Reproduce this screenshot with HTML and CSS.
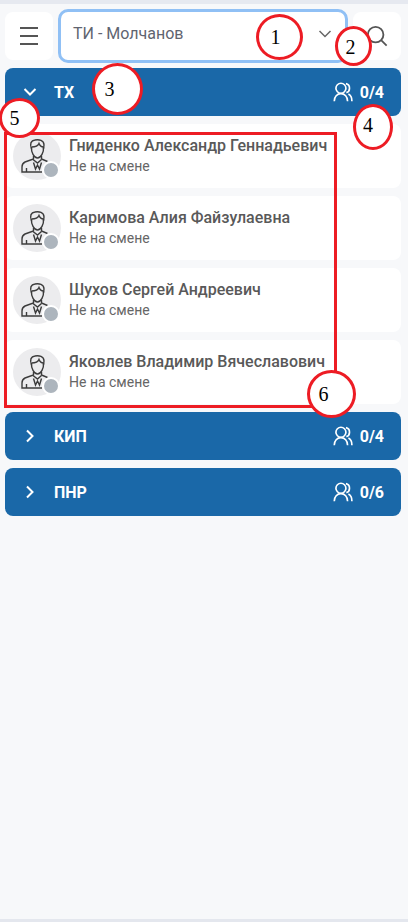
FILE: index.html
```html
<!DOCTYPE html>
<html lang="ru">
<head>
    <meta charset="UTF-8">
    <meta name="viewport" content="width=device-width, initial-scale=1.0">
    <title>Смена</title>
    <link rel="stylesheet" href="styles.css">
</head>
<body>
    <svg class="sprite" width="0" height="0">
        <symbol id="worker" viewBox="0 0 48 48">
            <path d="M18.500 17C16.500 11.500 18 8.500 22 8c4-1 9 .5 9 5l-.5 4"/>
            <path d="M18.500 15c3.500 0 6.500-1 7.500-3.500 1 2.500 2.500 3.500 4.500 3.500"/>
            <path d="M18.500 15c-.5 5 2.500 11 6 11s6.500-6 6-11"/>
            <path d="M20.500 24v3L12 30c-2 1-3 2.500-3 5v5h20M28.500 24v3l6 2.500"/>
            <path d="M20 27.500l4.500 3.500 4-3.500M20.500 30.500l2 6.500 2-4 2 4 2-6.500M13.500 36v4"/>
        </symbol>
        <symbol id="people" viewBox="0 0 24 24">
            <circle cx="9.500" cy="7.500" r="6"/>
            <path d="M1.500 23c0-5.500 3.500-9 8-9s8 3.500 8 9M15.500 2c2.500.5 4.300 2.800 4.300 5.500 0 2.500-1.600 4.700-3.800 5.300M18.500 14.500c2.600 1.200 4.200 4.500 4.200 8.500"/>
        </symbol>
    </svg>

    <div class="page">
        <header class="toolbar">
            <button class="tool-btn" aria-label="Меню">
                <svg class="menu-icon" viewBox="0 0 18 18"><path d="M0 1h18M0 9h18M0 17h18"/></svg>
            </button>
            <div class="team-select">
                <span>ТИ - Молчанов</span>
                <svg class="select-arrow" viewBox="0 0 14 10"><path d="M1.500 2l5.500 5.500 5.500-5.500"/></svg>
            </div>
            <button class="tool-btn" aria-label="Поиск">
                <svg class="search-icon" viewBox="0 0 24 24"><circle cx="10.500" cy="10.500" r="8.500"/><path d="M16.500 16.500l6 6"/></svg>
            </button>
        </header>

        <main class="groups">
            <section class="group">
                <div class="group-head">
                    <svg class="chevron" viewBox="0 0 14 14"><path d="M1.500 4l5.500 5.500 5.500-5.500"/></svg>
                    <span class="group-name">ТХ</span>
                    <svg class="people-icon"><use href="#people"/></svg>
                    <span class="group-count">0/4</span>
                </div>
            </section>
            <div class="person">
                <div class="avatar"><svg class="worker"><use href="#worker"/></svg><i class="status"></i></div>
                <div class="person-text"><div class="person-name">Гниденко Александр Геннадьевич</div><div class="person-state">Не на смене</div></div>
            </div>
            <div class="person">
                <div class="avatar"><svg class="worker"><use href="#worker"/></svg><i class="status"></i></div>
                <div class="person-text"><div class="person-name">Каримова Алия Файзулаевна</div><div class="person-state">Не на смене</div></div>
            </div>
            <div class="person">
                <div class="avatar"><svg class="worker"><use href="#worker"/></svg><i class="status"></i></div>
                <div class="person-text"><div class="person-name">Шухов Сергей Андреевич</div><div class="person-state">Не на смене</div></div>
            </div>
            <div class="person">
                <div class="avatar"><svg class="worker"><use href="#worker"/></svg><i class="status"></i></div>
                <div class="person-text"><div class="person-name">Яковлев Владимир Вячеславович</div><div class="person-state">Не на смене</div></div>
            </div>
            <section class="group">
                <div class="group-head">
                    <svg class="chevron" viewBox="0 0 14 14"><path d="M4 1.500l5.500 5.500-5.500 5.500"/></svg>
                    <span class="group-name">КИП</span>
                    <svg class="people-icon"><use href="#people"/></svg>
                    <span class="group-count">0/4</span>
                </div>
            </section>
            <section class="group">
                <div class="group-head">
                    <svg class="chevron" viewBox="0 0 14 14"><path d="M4 1.500l5.500 5.500-5.500 5.500"/></svg>
                    <span class="group-name">ПНР</span>
                    <svg class="people-icon"><use href="#people"/></svg>
                    <span class="group-count">0/6</span>
                </div>
            </section>
        </main>
    </div>

    <!-- пометки поверх скриншота -->
    <div class="mark-box"></div>
    <div class="mark mark-1">1</div>
    <div class="mark mark-2">2</div>
    <div class="mark mark-3">3</div>
    <div class="mark mark-4">4</div>
    <div class="mark mark-5">5</div>
    <div class="mark mark-6">6</div>
</body>
</html>
```

FILE: styles.css
```css
body {
    margin: 0;
    height: 922px;
    overflow: hidden;
    background-color: #f7f8fa;
    font-family: Roboto, "Liberation Sans", sans-serif;
}

.sprite {
    display: block;
}

.page {
    box-sizing: border-box;
    height: 922px;
    padding: 8px 7px 0 5px;
    border-top: 4px solid #e6e9f0;
    border-bottom: 3px solid #e4e7ee;
}

.toolbar {
    display: flex;
    gap: 5px;
    height: 48px;
    margin-bottom: 8px;
}

.tool-btn {
    display: flex;
    flex: none;
    align-items: center;
    justify-content: center;
    width: 48px;
    height: 48px;
    padding: 0;
    border: none;
    border-radius: 8px;
    background-color: #fff;
}

.menu-icon {
    width: 18px;
    height: 18px;
    fill: none;
    stroke: #555;
    stroke-width: 2;
}

.search-icon {
    width: 22px;
    height: 22px;
    fill: none;
    stroke: #555;
    stroke-width: 2;
}

.team-select {
    display: flex;
    flex: 1;
    align-items: center;
    justify-content: space-between;
    box-sizing: border-box;
    height: 54px;
    margin-top: -3px;
    padding: 0 13px 5px 12px;
    border: 3px solid #90c0f5;
    border-radius: 10px;
    background-color: #fff;
    color: #5f6470;
    font-size: 16px;
}

.select-arrow {
    width: 14px;
    height: 10px;
    fill: none;
    stroke: #666;
    stroke-width: 1.500;
}

.groups {
    display: flex;
    flex-direction: column;
    gap: 8px;
}

.group-head {
    display: flex;
    align-items: center;
    height: 48px;
    padding: 0 17px 0 18px;
    border-radius: 8px;
    background-color: #1a68a8;
    color: #fff;
    font-size: 16px;
    font-weight: 700;
}

.chevron {
    width: 14px;
    height: 14px;
    fill: none;
    stroke: #fff;
    stroke-width: 2;
}

.group-name {
    flex: 1;
    margin-left: 17px;
}

.people-icon {
    width: 20px;
    height: 20px;
    fill: none;
    stroke: #fff;
    stroke-width: 2;
}

.group-count {
    margin-left: 7px;
}

.person {
    display: flex;
    align-items: center;
    gap: 8px;
    height: 64px;
    padding: 0 8px;
    border-radius: 8px;
    background-color: #fff;
}

.avatar {
    position: relative;
    flex: none;
    width: 48px;
    height: 48px;
    border-radius: 50%;
    background-color: #ececee;
}

.worker {
    display: block;
    width: 48px;
    height: 48px;
    fill: none;
    stroke: #3c3c3c;
    stroke-width: 1.400;
}

.status {
    position: absolute;
    right: 1px;
    bottom: 1px;
    width: 14px;
    height: 14px;
    border: 2px solid #fff;
    border-radius: 50%;
    background-color: #adb5bd;
}

.person-name {
    color: #595959;
    font-size: 16px;
    font-weight: 500;
    line-height: 20px;
    white-space: nowrap;
}

.person-state {
    color: #666;
    font-size: 14px;
    line-height: 20px;
}

.mark-box {
    position: absolute;
    left: 4px;
    top: 132px;
    width: 327px;
    height: 270px;
    border: 3px solid #ed1c24;
}

.mark {
    position: absolute;
    display: flex;
    align-items: center;
    justify-content: center;
    box-sizing: border-box;
    border: 3px solid #ed1c24;
    border-radius: 50%;
    background-color: #fff;
    color: #000;
    font-family: "Liberation Serif", serif;
    font-size: 20px;
}

.mark-1 { left: 256px; top: 14px; width: 47px; height: 46px; padding-right: 8px; }
.mark-2 { left: 335px; top: 26px; width: 37px; height: 40px; padding: 2px 6px 0 0; }
.mark-3 { left: 92px; top: 63px; width: 51px; height: 52px; padding-right: 16px; }
.mark-4 { left: 353px; top: 104px; width: 40px; height: 46px; padding: 0 10px 4px 0; }
.mark-5 { left: -1px; top: 98px; width: 41px; height: 40px; padding-right: 10px; }
.mark-6 { left: 307px; top: 370px; width: 49px; height: 48px; padding-right: 16px; }
```
